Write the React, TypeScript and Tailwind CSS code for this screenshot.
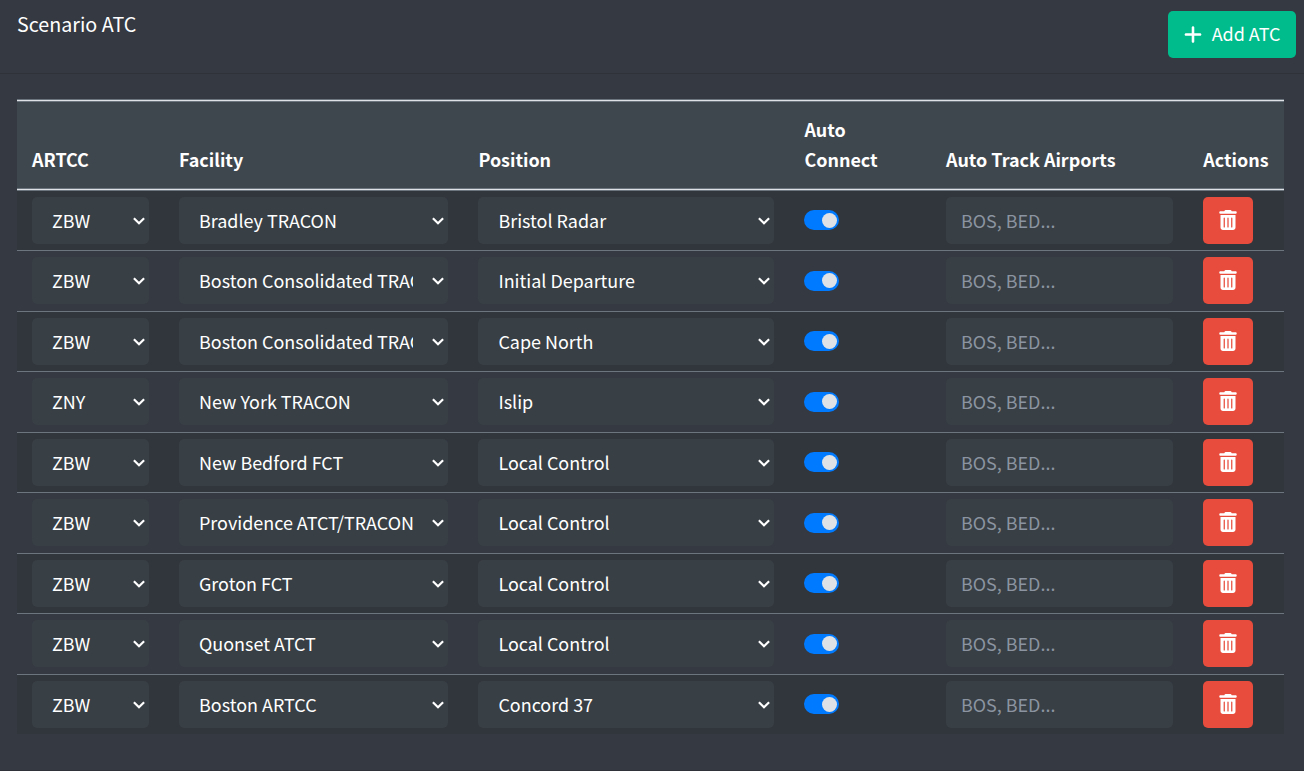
import { useState } from 'react';
import { FaPlus, FaTrashCan } from 'react-icons/fa6';

interface Controller {
  artcc: string;
  facility: string;
  position: string;
  autoConnect: boolean;
}

const initialControllers: Controller[] = [
  { artcc: 'ZBW', facility: 'Bradley TRACON', position: 'Bristol Radar', autoConnect: true },
  { artcc: 'ZBW', facility: 'Boston Consolidated TRACON', position: 'Initial Departure', autoConnect: true },
  { artcc: 'ZBW', facility: 'Boston Consolidated TRACON', position: 'Cape North', autoConnect: true },
  { artcc: 'ZNY', facility: 'New York TRACON', position: 'Islip', autoConnect: true },
  { artcc: 'ZBW', facility: 'New Bedford FCT', position: 'Local Control', autoConnect: true },
  { artcc: 'ZBW', facility: 'Providence ATCT/TRACON', position: 'Local Control', autoConnect: true },
  { artcc: 'ZBW', facility: 'Groton FCT', position: 'Local Control', autoConnect: true },
  { artcc: 'ZBW', facility: 'Quonset ATCT', position: 'Local Control', autoConnect: true },
  { artcc: 'ZBW', facility: 'Boston ARTCC', position: 'Concord 37', autoConnect: true },
];

function SelectBox({ value }: { value: string }) {
  return (
    <button
      type="button"
      className="flex h-[47px] w-full items-center rounded-[5px] bg-[#383f45] pl-5 pr-[4px] text-left text-white"
    >
      <span className="mr-[18px] min-w-0 flex-1 overflow-hidden whitespace-nowrap pb-px">{value}</span>
      <svg className="h-[9px] w-[13px] shrink-0" viewBox="0 0 13 9" fill="none">
        <path d="M1.9 2.3 7 7.3 12.1 2.3" stroke="#fff" strokeWidth="2.2" />
      </svg>
    </button>
  );
}

function Toggle({ on, onChange }: { on: boolean; onChange: () => void }) {
  return (
    <button
      type="button"
      role="switch"
      aria-checked={on}
      onClick={onChange}
      className={`flex h-5 w-[35px] items-center rounded-full px-[2px] ${on ? 'justify-end bg-[#007bff]' : 'justify-start bg-[#6c757d]'}`}
    >
      <span className="h-[15px] w-[15px] rounded-full bg-[#dee2e6]" />
    </button>
  );
}

export default function App() {
  const [controllers, setControllers] = useState(initialControllers);

  const toggle = (index: number) => {
    setControllers(controllers.map((c, i) => (i === index ? { ...c, autoConnect: !c.autoConnect } : c)));
  };

  const remove = (index: number) => {
    setControllers(controllers.filter((_, i) => i !== index));
  };

  const add = () => {
    setControllers([...controllers, { artcc: '', facility: '', position: '', autoConnect: true }]);
  };

  return (
    <div className="h-[771px] w-[1304px] overflow-hidden border-b border-[#2f3238] bg-[#353941] font-['Noto_Sans_CJK_SC',sans-serif] text-[17.95px] leading-[30px] text-white">
      {/* Card header */}
      <div className="flex h-[74px] items-start justify-between border-b border-[#2f3339] pl-[17px] pr-2 pt-[11px]">
        <h3 className="text-[19.7px] leading-[26px]">Scenario ATC</h3>
        <button
          type="button"
          onClick={add}
          className="flex h-[47px] w-32 items-center justify-center rounded-[5px] bg-[#00bc8c]"
        >
          <FaPlus className="mb-px mr-[10px] h-[21px] w-[18px]" />
          <span className="pb-[3px]">Add ATC</span>
        </button>
      </div>

      {/* Card body */}
      <div className="pl-[17px] pr-5 pt-[25px]">
        <div className="h-[91.5px] border-y border-[#6c757d]">
          <div className="h-full border-y border-[#dee2e6]">
            <div className="grid h-full grid-cols-[147px_299.4px_326px_141.6px_257.2px_95.8px] items-end border-y border-[#6c757d] bg-[#3f474e] pb-[13.5px] font-bold *:px-[15px]">
              <div>ARTCC</div>
              <div>Facility</div>
              <div>Position</div>
              <div>
                Auto
                <br />
                Connect
              </div>
              <div>Auto Track Airports</div>
              <div>Actions</div>
            </div>
          </div>
        </div>

        <div>
          {controllers.map((c, i) => (
            <div
              key={i}
              className="grid h-[60.5px] grid-cols-[147px_299.4px_326px_141.6px_257.2px_95.8px] items-center border-b border-[#6c757d] *:px-[15px] last:h-[59.5px] last:border-b-0 odd:bg-[#31353c] even:bg-[#353941]"
            >
              <div>
                <SelectBox value={c.artcc} />
              </div>
              <div>
                <SelectBox value={c.facility} />
              </div>
              <div>
                <SelectBox value={c.position} />
              </div>
              <div>
                <Toggle on={c.autoConnect} onChange={() => toggle(i)} />
              </div>
              <div>
                <input
                  type="text"
                  placeholder="BOS, BED..."
                  className="block h-[47px] w-full rounded-[5px] bg-[#383f45] px-[15px] pb-px text-white outline-none placeholder:text-[#8b94a0]"
                />
              </div>
              <div>
                <button
                  type="button"
                  aria-label="Delete"
                  onClick={() => remove(i)}
                  className="flex h-[47px] w-[50px] items-center justify-center rounded-[5px] bg-[#e74c3c]"
                >
                  <FaTrashCan className="mb-px h-5 w-[18px]" />
                </button>
              </div>
            </div>
          ))}
        </div>
      </div>
    </div>
  );
}
